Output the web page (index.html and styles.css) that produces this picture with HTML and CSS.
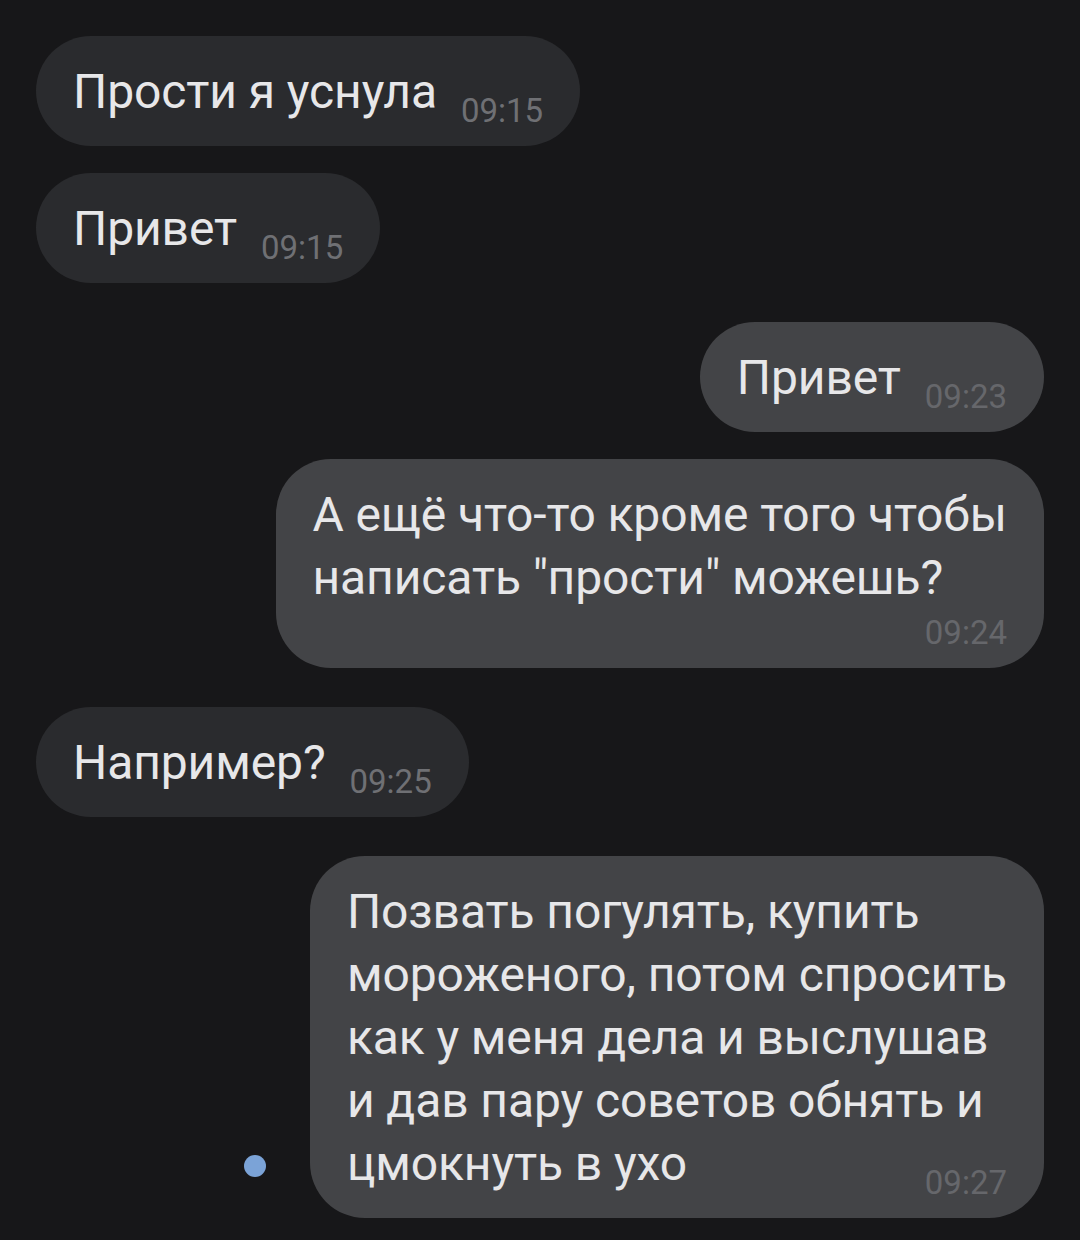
FILE: index.html
```html
<!DOCTYPE html>
<html lang="ru">
<head>
  <meta charset="UTF-8" />
  <meta name="viewport" content="width=device-width, initial-scale=1.0">
  <title>Чат</title>
  <link rel="stylesheet" href="styles.css">
</head>
<body>
  <div class="chat">
    <div class="row in">
      <div class="bubble">Прости я уснула<span class="time">09:15</span></div>
    </div>
    <div class="row in">
      <div class="bubble">Привет<span class="time">09:15</span></div>
    </div>

    <div class="row out first">
      <div class="bubble">Привет<span class="time">09:23</span></div>
    </div>
    <div class="row out">
      <div class="bubble">А ещё что-то кроме того чтобы<br>написать "прости" можешь?<span class="time below">09:24</span></div>
    </div>

    <div class="row in first">
      <div class="bubble">Например?<span class="time">09:25</span></div>
    </div>

    <div class="row out first">
      <span class="unread"></span>
      <div class="bubble">Позвать погулять, купить<br>мороженого, потом спросить<br>как у меня дела и выслушав<br>и дав пару советов обнять и<br>цмокнуть в ухо<span class="time">09:27</span></div>
    </div>
  </div>
</body>
</html>
```

FILE: styles.css
```css
html, body {
  margin: 0;
  background: #171719;
}

body {
  font-family: Roboto, "Noto Sans", sans-serif;
  color: #e7e7e9;
  width: 1080px;
  min-height: 1240px;
}

.chat {
  display: flex;
  flex-direction: column;
  gap: 27px;
  padding: 36px;
}

.row {
  display: flex;
  align-items: flex-end;
}

.row.first {
  margin-top: 12px;
}

.row.out {
  justify-content: flex-end;
}

.bubble {
  display: flow-root;
  padding: 24px 37px 16px 37px;
  border-radius: 55px;
  font-size: 48px;
  line-height: 63px;
  letter-spacing: -0.1px;
  white-space: nowrap;
  background: #2a2b2e;
}

.row.out .bubble {
  background: #434447;
}

.time {
  float: right;
  margin: 32px 0 0 24px;
  font-size: 33px;
  line-height: 38px;
  letter-spacing: 0;
  color: #6f7074;
}

.row.out .time {
  color: #66676b;
}

.time.below {
  float: none;
  display: block;
  text-align: right;
  margin: 5px 0 0;
}

.unread {
  width: 22px;
  height: 22px;
  border-radius: 50%;
  background: #7ba3d7;
  margin: 0 44px 41px 0;
}
```
